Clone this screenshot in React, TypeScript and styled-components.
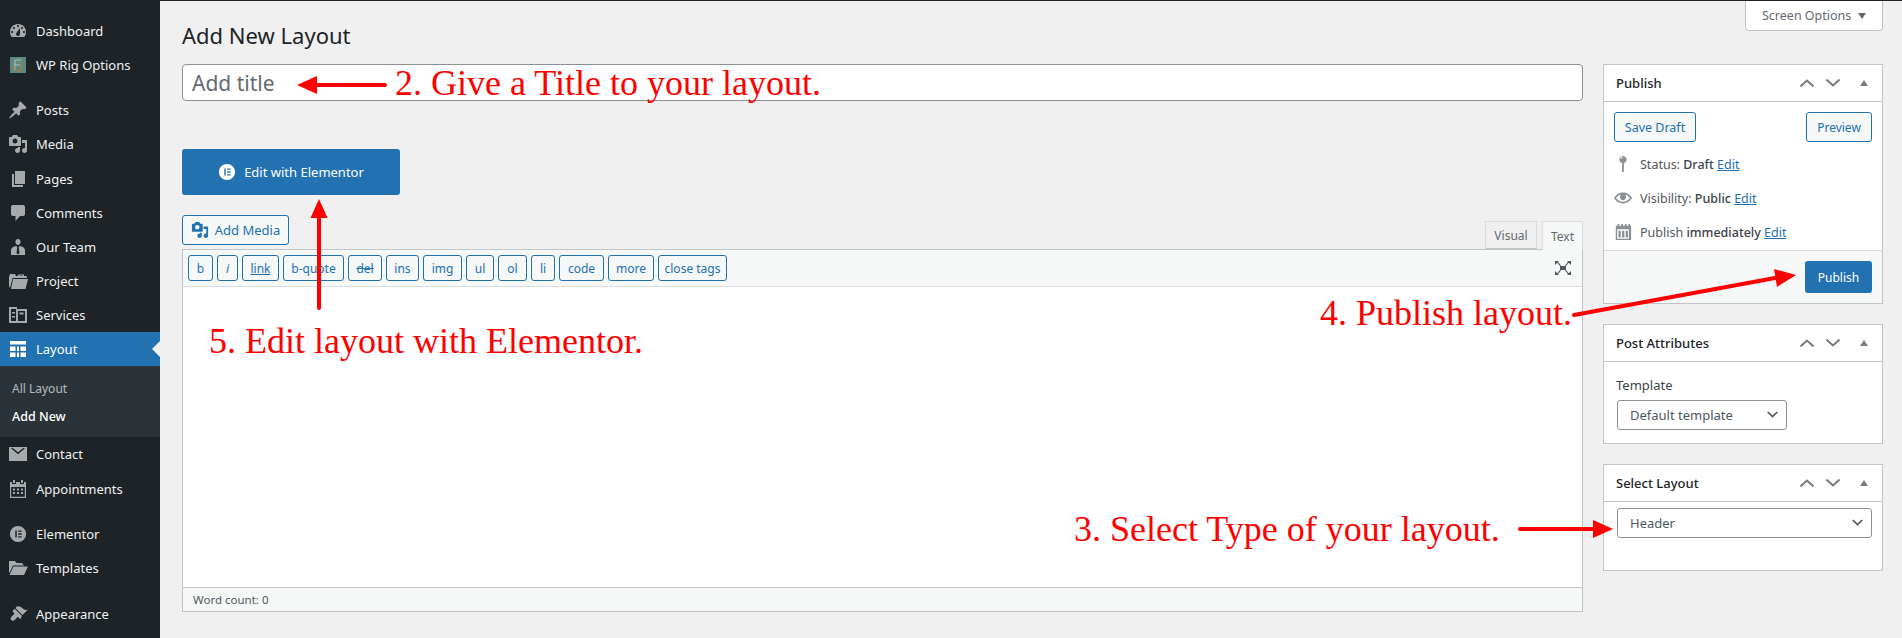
import { FC } from "react";
import styled, { createGlobalStyle } from "styled-components";

const FONT = `"Noto Sans", "Open Sans", sans-serif`;

const GlobalStyle = createGlobalStyle`
	html, body {
		margin: 0;
		padding: 0;
		background: #f0f0f1;
		font-family: ${FONT};
		font-size: 13px;
		color: #3c434a;
		overflow: hidden;
	}
	* {
		box-sizing: border-box;
	}
`;

const PATHS: Record<string, string> = {
	dashboard:
		"M3.76 16h12.48c1.1-1.37 1.76-3.11 1.76-5 0-4.42-3.58-8-8-8s-8 3.58-8 8c0 1.89.66 3.63 1.76 5zM10 4c.55 0 1 .45 1 1s-.45 1-1 1-1-.45-1-1 .45-1 1-1zM6 6c.55 0 1 .45 1 1s-.45 1-1 1-1-.45-1-1 .45-1 1-1zm8 0c.55 0 1 .45 1 1s-.45 1-1 1-1-.45-1-1 .45-1 1-1zm-5.37 5.55L12 7v6c0 1.1-.9 2-2 2s-2-.9-2-2c0-.57.24-1.08.63-1.45zM4 10c.55 0 1 .45 1 1s-.45 1-1 1-1-.45-1-1 .45-1 1-1zm12 0c.55 0 1 .45 1 1s-.45 1-1 1-1-.45-1-1 .45-1 1-1z",
	pin: "M10.44 3.02l1.82-1.82 6.36 6.35-1.83 1.82c-1.05-.68-2.48-.57-3.41.36l-.75.75c-.92.93-1.04 2.35-.35 3.41l-1.83 1.82-2.41-2.41-2.8 2.79c-.42.42-3.38 2.71-3.8 2.29s1.86-3.39 2.28-3.81l2.79-2.79L4.1 9.36l1.83-1.82c1.05.69 2.48.57 3.4-.36l.75-.75c.93-.92 1.05-2.35.36-3.41z",
	media:
		"M13 11V4c0-.55-.45-1-1-1h-1.67L9 1H5L3.67 3H2c-.55 0-1 .45-1 1v7c0 .55.45 1 1 1h10c.55 0 1-.45 1-1zM7 4.5c1.38 0 2.5 1.12 2.5 2.5S8.38 9.5 7 9.5 4.5 8.38 4.5 7 5.62 4.500 7 4.500zM14 6h5v10.500c0 1.380-1.120 2.500-2.500 2.500S14 17.880 14 16.500s1.120-2.500 2.500-2.500c.17 0 .34.020.5.050V9h-3V6zm-4 8.050V13h2v3.500c0 1.380-1.120 2.500-2.500 2.500S7 17.880 7 16.500 8.120 14 9.500 14c.17 0 .34.020.5.050z",
	pages: "M7 2h10v12.500L16.500 15H7V2zM4 5h2v11h9v2H4V5z",
	comments: "M5 2h10c1.100 0 2 .9 2 2v7c0 1.100-.9 2-2 2h-3l-4.500 5v-5H5c-1.100 0-2-.9-2-2V4c0-1.100.9-2 2-2z",
	team: "M10 2c1.500 0 2.600 1.200 2.600 2.800S11.500 8 10 8 7.400 6.400 7.400 4.800 8.500 2 10 2zM3 18v-4.500C3 11 5 9.500 8.200 9l1.100 1.100-.8 5.900L10 17.500 11.500 16l-.8-5.900L11.800 9c3.200.5 5.200 2 5.200 4.500V18H3z",
	project:
		"M1 6l1-3h5l1 2h2V3.500h6V5h2l1 1v1H4.500L2 17l-1-2V6zM5 8h15l-2.500 10H3L5 8zM11.500 4.500V5h3v-.5h-3z",
	services:
		"M1 2h8v2h10v14H1V2zm2 2v12h5V4H3zm7 2v10h7V6h-7zM4 7h3v1.500H4V7zm0 4h3v1.500H4V11zm7.500-3.500h4v2h-4v-2z",
	mail: "M1 3h18v14H1V3zm2.200 1.500L10 10.200l6.800-5.700L15.600 3.800 10 8.300 4.400 3.800 3.200 4.500z",
	calendar:
		"M5 1h2v3H5V1zm8 0h2v3h-2V1zM2 3h2v2h4V3h4v2h4V3h2v16H2V3zm1.200 5v9.800h13.600V8H3.200zM5 9.500h2v2H5v-2zm4 0h2v2H9v-2zm4 0h2v2h-2v-2zM5 13h2v2H5v-2zm4 0h2v2H9v-2zm4 0h2v2h-2v-2z",
	templates: "M1 3h6l1.500 2H14l2 2.500H5L1.500 15 1 14V3zM5.500 8.500H20L16 17H1.500l4-8.500z",
	brush:
		"M14.480 11.060L7.410 3.990l1.500-1.500c.5-.56 2.300-.47 3.510.32 1.210.8 1.430 1.280 2.910 2.100 1.180.64 2.450 1.260 4.450.85zm-.710.710L6.700 4.700 4.930 6.470c-.39.39-.39 1.020 0 1.410l1.060 1.060c.39.39.39 1.030 0 1.420-.6.600-1.430 1.150-2.120 1.840-1.280 1.280-1.840 2.560-.53 3.870 1.300 1.310 2.570.74 3.870-.53.700-.70 1.240-1.530 1.840-2.130.39-.39 1.020-.39 1.410 0l1.060 1.060c.39.39 1.020.39 1.410 0z",
	location:
		"M10 1c2.200 0 4 1.800 4 4 0 1.900-1.300 3.400-3 3.900V18c0 .6-.4 1-1 1s-1-.4-1-1V8.900C7.300 8.400 6 6.900 6 5c0-2.200 1.800-4 4-4zM8.500 4c.5 0 1-.4 1-1s-.5-1-1-1-1 .4-1 1 .5 1 1 1z",
	eye: "M19.700 9.400C17.700 6 14 3.900 10 3.900S2.300 6 .3 9.400L0 10l.3.600c2 3.400 5.700 5.500 9.700 5.500s7.700-2.100 9.700-5.500l.3-.6-.3-.6zM10 14.100c-3.100 0-6-1.600-7.700-4.100C3.600 8 5.600 6.600 7.800 6.200 7 6.900 6.500 7.900 6.500 9c0 1.900 1.600 3.500 3.500 3.500s3.500-1.600 3.500-3.500c0-1.100-.5-2.100-1.300-2.800 2.200.4 4.200 1.800 5.500 3.800-1.700 2.500-4.600 4.100-7.700 4.100z",
	publishCal:
		"M4 1h2v2h2V1h2v2h2V1h2v2h2V1h2v2h1v16H2V3h2V1zM3.500 7v10.500h13V7h-13zM5 8.500h2.500V16H5V8.500zm4 0h2.500V16H9V8.500zm4 0h2.500V16H13V8.500z",
};

const Dash: FC<{ name: string; size?: number; color?: string }> = ({ name, size = 20, color = "currentColor" }) => (
	<svg width={size} height={size} viewBox="0 0 20 20" fill={color} fillRule="evenodd">
		<path d={PATHS[name]} />
	</svg>
);

const ElementorMark: FC<{ size: number; color: string }> = ({ size, color }) => (
	<svg width={size} height={size} viewBox="0 0 20 20" fill={color} fillRule="evenodd">
		<path d="M10 1a9 9 0 1 0 0 18 9 9 0 0 0 0-18zM7 6h1.600v8H7V6zm3.200 0H14v1.600h-3.800V6zm0 3.200H14v1.600h-3.800V9.200zm0 3.200H14V14h-3.800v-1.600z" />
	</svg>
);

const LayoutMark: FC = () => (
	<svg width={16} height={16} viewBox="0 0 16 16" fill="#fff">
		<path d="M0 0h16v3.500H0zM0 5.500h5.500V10H0zM7 5.500h2V10H7zM10.500 5.500H16V10h-5.500zM0 11.500h5.500V16H0zM7 11.500h2V16H7zM10.500 11.500H16V16h-5.500z" />
	</svg>
);

const RigMark: FC = () => (
	<svg width={16} height={16} viewBox="0 0 16 16">
		<rect width="16" height="16" fill="#5c8a80" />
		<path d="M5 3h6M5 3v10M5 8h5" stroke="#a9c0b9" strokeWidth="1.2" fill="none" />
		<path d="M5.500 9v3.500c0 1 .8 1.500 2.500 1.500s2.800-.5 2.800-1.500V3" stroke="#c17a3a" strokeWidth="1" fill="none" />
	</svg>
);

const Page = styled.div`
	display: flex;
	width: 1902px;
	height: 638px;
	overflow: hidden;
	position: relative;
	border-top: 1px solid #1d2327;
`;

const Sidebar = styled.nav`
	width: 160px;
	flex-shrink: 0;
	background: #1d2327;
	padding-top: 13px;
`;

const MenuItem = styled.div<{ $active?: boolean; $gap?: number }>`
	position: relative;
	display: flex;
	align-items: center;
	height: 34.15px;
	margin-top: ${(p) => p.$gap ?? 0}px;
	background: ${(p) => (p.$active ? "#2271b1" : "transparent")};
	color: ${(p) => (p.$active ? "#fff" : "#f0f0f1")};
	font-size: 13px;
	${(p) =>
		p.$active &&
		`&::after {
			content: "";
			position: absolute;
			right: 0;
			top: 50%;
			margin-top: -8px;
			border: 8px solid transparent;
			border-right-color: #f0f0f1;
		}`}
`;

const MenuIcon = styled.span`
	display: flex;
	align-items: center;
	justify-content: center;
	width: 36px;
	flex-shrink: 0;
	color: #a7aaad;
`;

const SubMenu = styled.div`
	height: 71px;
	padding-top: 9px;
	background: #2c3338;
`;

const SubItem = styled.div<{ $current?: boolean }>`
	height: 28px;
	line-height: 28px;
	padding-left: 12px;
	font-size: ${(p) => (p.$current ? "12.5px" : "12px")};
	color: ${(p) => (p.$current ? "#fff" : "rgba(240, 246, 252, 0.7)")};
	font-weight: ${(p) => (p.$current ? 500 : 400)};
`;

const Main = styled.main`
	flex: 1;
	min-width: 0;
	padding: 0 19px 0 22px;
`;

const TopRow = styled.div`
	display: flex;
	justify-content: space-between;
	align-items: flex-start;
	height: 63px;
`;

const Heading = styled.h1`
	margin: 18px 0 0;
	font-size: 22px;
	line-height: 32px;
	font-weight: 400;
	color: #1d2327;
`;

const ScreenOptions = styled.button`
	display: flex;
	align-items: center;
	gap: 7px;
	width: 138px;
	height: 30px;
	padding: 0 0 0 16px;
	background: #fff;
	border: 1px solid #c3c4c7;
	border-top: 0;
	border-radius: 0 0 4px 4px;
	font: 12.5px ${FONT};
	color: #646970;
`;

const DownTriangle = styled.span`
	border: 4.5px solid transparent;
	border-top: 6px solid #646970;
	border-bottom: 0;
`;

const Columns = styled.div`
	display: flex;
	gap: 20px;
`;

const LeftColumn = styled.div`
	flex: 1;
	min-width: 0;
	display: flex;
	flex-direction: column;
	height: 548px;
`;

const RightColumn = styled.aside`
	width: 280px;
	flex-shrink: 0;
	display: flex;
	flex-direction: column;
	gap: 20px;
`;

const TitleInput = styled.input`
	height: 37px;
	padding: 0 9px;
	border: 1px solid #8c8f94;
	border-radius: 4px;
	background: #fff;
	font: 21px ${FONT};
	color: #2c3338;
	outline: none;
	&::placeholder {
		color: #646970;
		opacity: 1;
	}
`;

const ElementorButton = styled.button`
	display: flex;
	align-items: center;
	justify-content: center;
	gap: 8px;
	width: 218px;
	height: 46px;
	margin-top: 48px;
	padding: 0;
	border: 0;
	border-radius: 3px;
	background: #2271b1;
	color: #fff;
	font: 13px ${FONT};
`;

const MediaRow = styled.div`
	display: flex;
	justify-content: space-between;
	align-items: flex-start;
	height: 34px;
	margin-top: 20px;
`;

const OutlineButton = styled.button<{ $width?: number; $height?: number; $size?: number }>`
	display: inline-flex;
	align-items: center;
	justify-content: center;
	gap: 6px;
	width: ${(p) => (p.$width ? `${p.$width}px` : "auto")};
	height: ${(p) => p.$height ?? 30}px;
	padding: 0;
	border: 1px solid #2271b1;
	border-radius: 3px;
	background: #f6f7f7;
	color: #2271b1;
	font: ${(p) => p.$size ?? 12}px ${FONT};
	white-space: nowrap;
`;

const Tabs = styled.div`
	display: flex;
	gap: 5px;
	margin-top: 6px;
	height: 29px;
`;

const Tab = styled.div<{ $active?: boolean }>`
	display: flex;
	align-items: center;
	justify-content: center;
	width: ${(p) => (p.$active ? "41px" : "52px")};
	height: ${(p) => (p.$active ? "29px" : "28px")};
	padding-top: 1px;
	border: 1px solid #dcdcde;
	border-bottom: ${(p) => (p.$active ? "0" : "1px solid #c3c4c7")};
	background: ${(p) => (p.$active ? "#f6f7f7" : "#f0f0f1")};
	color: #646970;
	font-size: 12px;
	position: relative;
	z-index: 1;
`;

const Editor = styled.div`
	flex: 1;
	display: flex;
	flex-direction: column;
	border: 1px solid #c3c4c7;
	background: #fff;
`;

const Toolbar = styled.div`
	display: flex;
	align-items: center;
	gap: 4px;
	height: 37px;
	padding: 0 0 0 5px;
	background: #f6f7f7;
	border-bottom: 1px solid #dcdcde;
`;

const ExpandButton = styled.span`
	display: flex;
	margin-left: auto;
	margin-right: 11px;
	color: #50575e;
`;

const EditorArea = styled.div`
	flex: 1;
`;

const StatusBar = styled.div`
	display: flex;
	align-items: center;
	height: 24px;
	padding-left: 10px;
	background: #f6f7f7;
	border-top: 1px solid #c3c4c7;
	font-size: 11.5px;
	color: #50575e;
`;

const Box = styled.section<{ $height: number }>`
	height: ${(p) => p.$height}px;
	display: flex;
	flex-direction: column;
	border: 1px solid #c3c4c7;
	background: #fff;
`;

const BoxHead = styled.header`
	display: flex;
	align-items: center;
	height: 37px;
	flex-shrink: 0;
	padding: 0 14px 0 12px;
	border-bottom: 1px solid #c3c4c7;
`;

const BoxTitle = styled.h2`
	flex: 1;
	margin: 0;
	font-size: 13px;
	font-weight: 500;
	color: #1d2327;
`;

const HandleGroup = styled.div`
	display: flex;
	align-items: center;
	gap: 12px;
`;

const DraftRow = styled.div`
	display: flex;
	justify-content: space-between;
	padding: 10px 10px 0;
`;

const MetaList = styled.div`
	flex: 1;
	padding-top: 5px;
`;

const MetaRow = styled.div`
	display: flex;
	align-items: center;
	height: 34px;
	padding-left: 10px;
	gap: 8px;
	font-size: 12.5px;
	color: #50575e;
`;

const MetaIcon = styled.span`
	display: flex;
	justify-content: center;
	width: 18px;
	color: #8c8f94;
`;

const Strong = styled.b`
	font-weight: 500;
	color: #3c434a;
`;

const EditLink = styled.a`
	color: #2271b1;
	text-decoration: underline;
`;

const BoxFooter = styled.div`
	display: flex;
	justify-content: flex-end;
	padding: 10px;
	height: 53px;
	background: #f6f7f7;
	border-top: 1px solid #dcdcde;
`;

const PublishButton = styled.button`
	width: 67px;
	height: 32px;
	padding: 0;
	border: 0;
	border-radius: 3px;
	background: #2271b1;
	color: #fff;
	font: 12px ${FONT};
`;

const FieldLabel = styled.div`
	margin: 13px 0 0 12px;
	font-size: 13px;
	line-height: 20px;
	color: #3c434a;
`;

const SelectWrap = styled.div<{ $width: number; $top: number }>`
	position: relative;
	width: ${(p) => p.$width}px;
	margin: ${(p) => p.$top}px 0 0 13px;
	color: #50575e;
	svg {
		position: absolute;
		right: 9px;
		top: 11px;
	}
`;

const Select = styled.select`
	display: block;
	width: 100%;
	height: 30px;
	padding: 0 8px 0 12px;
	appearance: none;
	border: 1px solid #8c8f94;
	border-radius: 3px;
	background: #fff;
	font: 13px ${FONT};
	color: #50575e;
`;

const Note = styled.div<{ $x: number; $y: number }>`
	position: absolute;
	left: ${(p) => p.$x}px;
	top: ${(p) => p.$y}px;
	font: 36px/40px "Liberation Serif", serif;
	color: #ff0000;
	white-space: nowrap;
`;

const ArrowLayer = styled.svg`
	position: absolute;
	left: 0;
	top: -1px;
	pointer-events: none;
`;

const Handles: FC = () => (
	<HandleGroup>
		<svg width="14" height="8" viewBox="0 0 14 8" fill="none" stroke="#787c82" strokeWidth="2">
			<path d="M.5 7.500L7 1.500l6.500 6" />
		</svg>
		<svg width="14" height="8" viewBox="0 0 14 8" fill="none" stroke="#787c82" strokeWidth="2">
			<path d="M.5 .5L7 6.500l6.500-6" />
		</svg>
		<svg width="8" height="6" viewBox="0 0 8 6" fill="#787c82" style={{ marginLeft: 8 }}>
			<path d="M4 0l4 6H0z" />
		</svg>
	</HandleGroup>
);

const Chevron: FC = () => (
	<svg width="11" height="7" viewBox="0 0 11 7" fill="none" stroke="currentColor" strokeWidth="1.700">
		<path d="M.7 1l4.800 4.500L10.300 1" />
	</svg>
);

const MENU_TOP = [
	{ label: "Posts", icon: "pin", gap: 11 },
	{ label: "Media", icon: "media" },
	{ label: "Pages", icon: "pages" },
	{ label: "Comments", icon: "comments" },
	{ label: "Our Team", icon: "team" },
	{ label: "Project", icon: "project" },
	{ label: "Services", icon: "services" },
];

const TOOLS = [
	{ label: "b", width: 25 },
	{ label: "i", width: 21, italic: true },
	{ label: "link", width: 37, underline: true },
	{ label: "b-quote", width: 61 },
	{ label: "del", width: 34, strike: true },
	{ label: "ins", width: 33 },
	{ label: "img", width: 39 },
	{ label: "ul", width: 28 },
	{ label: "ol", width: 29 },
	{ label: "li", width: 24 },
	{ label: "code", width: 45 },
	{ label: "more", width: 46 },
	{ label: "close tags", width: 69 },
];

const ToolLabel = styled.span<{ $italic?: boolean; $deco?: string }>`
	font-style: ${(p) => (p.$italic ? "italic" : "normal")};
	text-decoration: ${(p) => p.$deco ?? "none"};
`;

const App: FC = () => {
	return (
		<>
			<GlobalStyle />
			<Page>
				<Sidebar>
					<MenuItem>
						<MenuIcon>
							<Dash name="dashboard" />
						</MenuIcon>
						Dashboard
					</MenuItem>
					<MenuItem>
						<MenuIcon>
							<RigMark />
						</MenuIcon>
						WP Rig Options
					</MenuItem>
					{MENU_TOP.map((item) => (
						<MenuItem key={item.label} $gap={item.gap}>
							<MenuIcon>
								<Dash name={item.icon} />
							</MenuIcon>
							{item.label}
						</MenuItem>
					))}
					<MenuItem $active>
						<MenuIcon>
							<LayoutMark />
						</MenuIcon>
						Layout
					</MenuItem>
					<SubMenu>
						<SubItem>All Layout</SubItem>
						<SubItem $current>Add New</SubItem>
					</SubMenu>
					<MenuItem>
						<MenuIcon>
							<Dash name="mail" />
						</MenuIcon>
						Contact
					</MenuItem>
					<MenuItem>
						<MenuIcon>
							<Dash name="calendar" />
						</MenuIcon>
						Appointments
					</MenuItem>
					<MenuItem $gap={11}>
						<MenuIcon>
							<ElementorMark size={18} color="#a7aaad" />
						</MenuIcon>
						Elementor
					</MenuItem>
					<MenuItem>
						<MenuIcon>
							<Dash name="templates" />
						</MenuIcon>
						Templates
					</MenuItem>
					<MenuItem $gap={12}>
						<MenuIcon>
							<Dash name="brush" />
						</MenuIcon>
						Appearance
					</MenuItem>
				</Sidebar>

				<Main>
					<TopRow>
						<Heading>Add New Layout</Heading>
						<ScreenOptions type="button">
							Screen Options
							<DownTriangle />
						</ScreenOptions>
					</TopRow>

					<Columns>
						<LeftColumn>
							<TitleInput placeholder="Add title" />
							<ElementorButton type="button">
								<ElementorMark size={18} color="#fff" />
								Edit with Elementor
							</ElementorButton>
							<MediaRow>
								<OutlineButton type="button" $width={107} $size={13}>
									<Dash name="media" size={18} />
									Add Media
								</OutlineButton>
								<Tabs>
									<Tab>Visual</Tab>
									<Tab $active>Text</Tab>
								</Tabs>
							</MediaRow>
							<Editor>
								<Toolbar>
									{TOOLS.map((tool) => (
										<OutlineButton key={tool.label} type="button" $width={tool.width} $height={26}>
											<ToolLabel
												$italic={tool.italic}
												$deco={tool.underline ? "underline" : tool.strike ? "line-through" : undefined}
											>
												{tool.label}
											</ToolLabel>
										</OutlineButton>
									))}
									<ExpandButton>
										<svg width="16" height="14" viewBox="0 0 16 14" fill="currentColor">
											<path d="M0 0h4L3 1l3 3.500-.8.7L2.200 1.800 1 3 0 4zM16 0h-4l1 1-3 3.500.8.7 3-3.400L15 3l1 1zM0 14h4l-1-1 3-3.500-.8-.7-3 3.400L1 11l-1-1zM16 14h-4l1-1-3-3.500.8-.7 3 3.400L15 11l1-1zM5 5h6v4H5z" />
										</svg>
									</ExpandButton>
								</Toolbar>
								<EditorArea />
								<StatusBar>Word count: 0</StatusBar>
							</Editor>
						</LeftColumn>

						<RightColumn>
							<Box $height={240}>
								<BoxHead>
									<BoxTitle>Publish</BoxTitle>
									<Handles />
								</BoxHead>
								<DraftRow>
									<OutlineButton type="button" $width={82} $size={12.5}>
										Save Draft
									</OutlineButton>
									<OutlineButton type="button" $width={66}>
										Preview
									</OutlineButton>
								</DraftRow>
								<MetaList>
									<MetaRow>
										<MetaIcon>
											<Dash name="location" />
										</MetaIcon>
										<span>
											Status: <Strong>Draft</Strong> <EditLink>Edit</EditLink>
										</span>
									</MetaRow>
									<MetaRow>
										<MetaIcon>
											<Dash name="eye" />
										</MetaIcon>
										<span>
											Visibility: <Strong>Public</Strong> <EditLink>Edit</EditLink>
										</span>
									</MetaRow>
									<MetaRow>
										<MetaIcon>
											<Dash name="publishCal" />
										</MetaIcon>
										<span>
											Publish <Strong>immediately</Strong> <EditLink>Edit</EditLink>
										</span>
									</MetaRow>
								</MetaList>
								<BoxFooter>
									<PublishButton type="button">Publish</PublishButton>
								</BoxFooter>
							</Box>

							<Box $height={120}>
								<BoxHead>
									<BoxTitle>Post Attributes</BoxTitle>
									<Handles />
								</BoxHead>
								<FieldLabel>Template</FieldLabel>
								<SelectWrap $width={170} $top={5}>
									<Select defaultValue="default">
										<option value="default">Default template</option>
									</Select>
									<Chevron />
								</SelectWrap>
							</Box>

							<Box $height={107}>
								<BoxHead>
									<BoxTitle>Select Layout</BoxTitle>
									<Handles />
								</BoxHead>
								<SelectWrap $width={255} $top={6}>
									<Select defaultValue="header">
										<option value="header">Header</option>
									</Select>
									<Chevron />
								</SelectWrap>
							</Box>
						</RightColumn>
					</Columns>
				</Main>

				<ArrowLayer width="1902" height="638" viewBox="0 0 1902 638" fill="#ff0000" stroke="none">
					<path d="M297 85L317 76V94z" />
					<path d="M316 85H385" stroke="#ff0000" strokeWidth="4" strokeLinecap="round" />
					<path d="M319 199L327.500 218H310.500z" />
					<path d="M319 217V308" stroke="#ff0000" strokeWidth="4" strokeLinecap="round" />
					<path d="M1796 275L1777 287 1774 269z" />
					<path d="M1775 278L1574 315" stroke="#ff0000" strokeWidth="4" strokeLinecap="round" />
					<path d="M1613 529L1593 520V538z" />
					<path d="M1594 529H1520" stroke="#ff0000" strokeWidth="4" strokeLinecap="round" />
				</ArrowLayer>

				<Note $x={395} $y={62}>2. Give a Title to your layout.</Note>
				<Note $x={1074} $y={508}>3. Select Type of your layout.</Note>
				<Note $x={1320} $y={292}>4. Publish layout.</Note>
				<Note $x={209} $y={320}>5. Edit layout with Elementor.</Note>
			</Page>
		</>
	);
};

export default App;
